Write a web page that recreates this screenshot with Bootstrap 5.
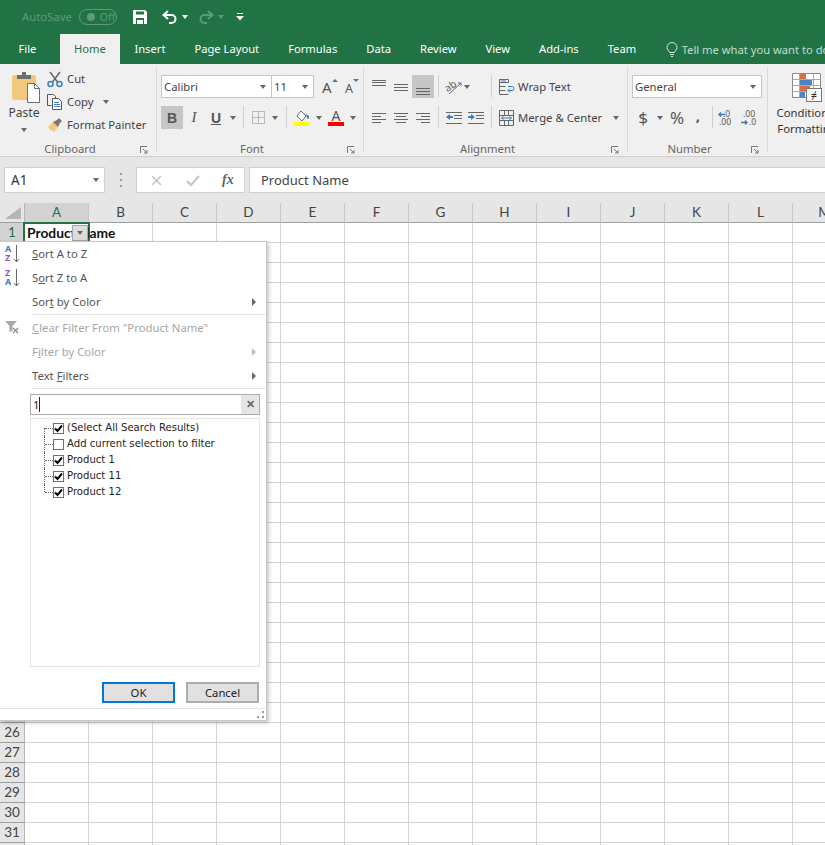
<!DOCTYPE html>
<html lang="en">
<head>
    <meta charset="UTF-8">
    <title>Excel - Filter menu</title>
    <link href="https://cdn.jsdelivr.net/npm/bootstrap@5.3.0/dist/css/bootstrap.min.css" rel="stylesheet">
    <style>
        html, body { height: 845px; overflow: hidden; }
        body { width: 825px; background: #fff; font: 11.3px/16px "Noto Sans", sans-serif; color: #444; }
        svg { overflow: visible; }

        /* title bar and tabs */
        .xl-title { height: 34px; background: #217346; padding-left: 22px; color: #5c9b7a; font-size: 11.3px; }
        .xl-pill { width: 38px; height: 16px; border: 1px solid #5c9b7a; border-radius: 8px; margin-left: 7px; font-size: 10.5px; padding-left: 7px; flex: none; }
        .xl-dot { width: 8px; height: 8px; border-radius: 50%; background: #5c9b7a; margin-right: 1px; flex: none; }
        .tb-save { margin-left: 16px; }
        .tb-undo { margin-left: 15px; }
        .tb-redo { margin-left: 10px; }
        .tb-tri { margin-left: 4px; }
        .tb-more { margin-left: 12px; }
        .xl-tabs { height: 30px; background: #217346; color: #fff; padding-left: 4px; font-size: 11.2px; white-space: nowrap; }
        .xl-tab { padding: 0 14.5px; line-height: 29px; height: 30px; flex: none; }
        .xl-tab.is-on { background: #f0f0f0; color: #217346; width: 60px; padding: 0; margin-left: 9px; text-align: center; }
        .xl-tell { color: #c5dbcf; margin-left: 15px; line-height: 29px; flex: none; }

        /* ribbon */
        .xl-ribbon { height: 93px; background: #f0f0f0; border-bottom: 1px solid #cfcfcf; overflow: hidden; }
        .rgrp { flex: none; }
        .rgrp-in { flex: 1 1 auto; min-width: 0; }
        .rbody { height: 77px; }
        .rbody-pad { padding: 11px 0 0 4px; }
        .rfoot { height: 14px; line-height: 15px; color: #666; }
        .rfoot-txt { flex: 1 1 auto; text-align: center; }
        .rlaunch { width: 16px; flex: none; }
        .rsep { width: 1px; flex: none; background: #d9d9d9; margin: 4px 0 4px; }
        .g-clip { width: 157px; } .g-font { width: 207px; } .g-align { width: 264px; } .g-num { width: 140px; }
        .g-cond { width: 78px; text-align: center; line-height: 16px; padding-top: 8px; }
        .cond-txt { margin-top: 3px; color: #333; white-space: nowrap; }
        .rrow { height: 23px; }
        .rrow + .rrow { margin-top: 8px; }
        .tl { height: 23px; display: flex; align-items: center; justify-content: center; flex: none; color: #555; }
        .tw8 { width: 8px; } .tw10 { width: 10px; } .tw11 { width: 11px; } .tw12 { width: 12px; } .tw14 { width: 14px; }
        .tw16 { width: 16px; } .tw18 { width: 18px; } .tw20 { width: 20px; } .tw22 { width: 22px; } .tw24 { width: 24px; }
        .tl.is-on { background: #c6c6c6; }
        .vsep { width: 1px; height: 22px; background: #d0d0d0; flex: none; }
        .tri { width: 0; height: 0; border-left: 4px solid transparent; border-right: 4px solid transparent; border-top: 4px solid #666; display: inline-block; }
        .tri.tiny { border-left-width: 3.5px; border-right-width: 3.5px; }
        .tri.on-green { border-top-color: #fff; }
        .tri.on-green.dim { border-top-color: #5c9b7a; }
        .triR { width: 0; height: 0; border-top: 4px solid transparent; border-bottom: 4px solid transparent; border-left: 4px solid #666; }
        .triR.off { border-left-color: #bdbdbd; }
        .combo { height: 23px; background: #fff; border: 1px solid #c6c6c6; padding: 0 5px 0 2px; line-height: 21px; flex: none; }
        .cw111 { width: 111px; } .cw43 { width: 43px; margin-left: -1px; } .cw130 { width: 130px; }
        .a-left { width: 123px; flex: none; }
        .a-right { margin-left: 7px; }
        .a-lbl { margin-left: 3px; white-space: nowrap; }
        .clip-side { padding-top: 3px; margin-left: 7px; }
        .clip-row { height: 23px; }
        .paste-col { width: 32px; margin-left: 8px; padding-top: 8px; text-align: center; line-height: 15px; }
        .paste-lbl { margin-top: 2px; font-size: 12px; }
        .copy-tri { margin-left: 10px; }
        .big-b { font: bold 14px/1 "Liberation Sans", sans-serif; }
        .big-i { font: italic 15px/1 "Liberation Serif", serif; }
        .big-u { font: bold 14px/1 "Liberation Sans", sans-serif; text-decoration: underline; }
        .num-sym { font-size: 17px; line-height: 1; }
        .num-comma { padding-bottom: 6px; font-weight: 700; font-size: 15px; }
        .merge-tri { margin-left: 11px; }

        /* formula bar */
        .xl-fbar { height: 46px; background: #e6e6e6; padding: 10px 0 10px 4px; }
        .fb-box { height: 26px; background: #fff; border: 1px solid #cfcfcf; flex: none; }
        .fb-name { width: 101px; padding: 0 5px 0 6px; font-size: 13.5px; line-height: 24px; color: #333; }
        .fb-dots { width: 31px; }
        .fb-btns { width: 109px; }
        .fb-x { margin-left: 14px; }
        .fb-ok { margin-left: 24px; }
        .fb-fx { margin-left: 22px; font: italic bold 14px/1 "Liberation Serif", serif; color: #666; }
        .fb-input { margin-left: 4px; flex: 1 1 auto; padding-left: 11px; margin-right: -4px; font-size: 13px; line-height: 24px; color: #444; }
        .fb-dots i { display: block; width: 2px; height: 2px; background: #9a9a9a; margin: 2px 0; }

        /* sheet */
        .xl-sheet { position: relative; height: 642px; overflow: hidden; }
        .sheet-grid { display: grid; grid-template-columns: 25px repeat(13, 64px); grid-auto-rows: 20px; font: 13.5px/19px Lato, sans-serif; color: #444; }
        .cl { border-right: 1px solid #d4d4d4; border-bottom: 1px solid #d4d4d4; }
        .hd { background: #e6e6e6; text-align: center; border-right: 1px solid #b5b5b5; border-bottom: 1px solid #9f9f9f; }
        .hd-col { border-right-color: #c8c8c8; }
        .hd.is-sel { background: #d2d2d2; color: #217346; }
        .corner { width: 0; height: 0; border-left: 16px solid transparent; border-bottom: 12px solid #b5b5b5; margin: 4px 0 0 5px; }
        .cell-sel { position: absolute; left: 23px; top: 19px; width: 67px; height: 22px; border: 2px solid #217346; font: bold 13.8px/18px Lato, sans-serif; color: #111; padding-left: 2px; white-space: nowrap; }
        .filter-btn { position: absolute; left: 72px; top: 22px; width: 16px; height: 16px; background: #dcdcdc; border: 1px solid #a6a6a6; display: flex; align-items: center; justify-content: center; }

        /* filter menu */
        .flt-menu { position: absolute; left: 0; top: 38px; width: 267px; height: 480px; background: #fff; border: 1px solid #c8c8c8; border-left: 0; box-shadow: 2px 2px 4px rgba(0,0,0,.22); }
        .flt-item { height: 24px; line-height: 23px; padding-left: 32px; padding-right: 10px; position: relative; color: #555; }
        .flt-item.off { color: #a6a6a6; }
        .flt-ico { position: absolute; left: 4px; top: 2px; }
        .flt-sep { height: 1px; background: #e3e3e3; margin: 0 0 1px 32px; }
        .flt-sep.lo { margin-bottom: 5px; }
        .flt-search { height: 21px; margin-left: 30px; width: 230px; border: 1px solid #ababab; line-height: 19px; padding-left: 2px; color: #222; }
        .flt-x { width: 18px; background: #e6e6e6; color: #666; font-weight: 700; text-align: center; line-height: 18px; }
        .flt-list { width: 230px; height: 249px; margin: 3px 0 0 30px; border: 1px solid #e3e3e3; padding: 1px 0 0 13px; list-style: none; font: 10.1px/16px "DejaVu Sans", sans-serif; color: #222; white-space: nowrap; }
        .flt-list li { height: 16px; position: relative; padding-left: 9px; display: flex; align-items: center; }
        .flt-list li::before { content: ""; position: absolute; left: 0; top: 0; bottom: 0; border-left: 1px dotted #666; }
        .flt-list li:last-child::before { bottom: 8px; }
        .flt-list li:first-child::before { top: 8px; }
        .flt-list li::after { content: ""; position: absolute; left: 1px; width: 8px; top: 8px; border-top: 1px dotted #666; }
        .flt-chk { width: 11px; height: 11px; border: 1px solid #707070; background: #fff; margin-right: 3px; flex: none; display: flex; }
        .flt-btns { margin: 15px 7px 0 0; }
        .flt-btn { width: 73px; height: 21px; background: #e1e1e1; border: 2px solid #adadad; line-height: 17px; text-align: center; color: #222; }
        .flt-btn.is-def { border-color: #0078d7; margin-right: 11px; }
        .flt-foot { height: 1px; background: #dce6f0; margin-top: 5px; }
        .flt-grip { position: absolute; right: 2px; bottom: 2px; }
    </style>
</head>
<body>

<!-- Title bar -->
<div class="xl-title d-flex align-items-center">
    <span>AutoSave</span>
    <div class="xl-pill d-flex align-items-center"><span class="xl-dot"></span><span class="ms-1">Off</span></div>
    <svg class="tb-save" width="14" height="14" viewBox="0 0 14 14"><path fill="#fff" d="M0 0h12l2 2v12H0z"/><path fill="#217346" d="M3 1.500h8v3H3zM3 8h8v6H3z"/><path fill="#fff" d="M4 10h6v4H4z"/></svg>
    <svg class="tb-undo" width="16" height="15" viewBox="0 0 16 15" fill="none" stroke="#fff" stroke-width="2"><path d="M6 1 1.500 5 6 9M2 5h7.500a4 4 0 0 1 0 8H7"/></svg>
    <span class="tri tiny on-green tb-tri"></span>
    <svg class="tb-redo" width="16" height="15" viewBox="0 0 16 15" fill="none" stroke="#5c9b7a" stroke-width="2"><path d="M10 1l4.500 4L10 9M14 5H6.500a4 4 0 0 0 0 8H9"/></svg>
    <span class="tri tiny on-green dim tb-tri"></span>
    <svg class="tb-more" width="8" height="8" viewBox="0 0 8 8"><path fill="#fff" d="M1 0h6v1H1zM0 3h8L4 7.500z"/></svg>
</div>

<!-- Tabs -->
<div class="xl-tabs d-flex">
    <div class="xl-tab">File</div>
    <div class="xl-tab is-on">Home</div>
    <div class="xl-tab">Insert</div>
    <div class="xl-tab">Page Layout</div>
    <div class="xl-tab">Formulas</div>
    <div class="xl-tab">Data</div>
    <div class="xl-tab">Review</div>
    <div class="xl-tab">View</div>
    <div class="xl-tab">Add-ins</div>
    <div class="xl-tab">Team</div>
    <div class="xl-tell d-flex align-items-center">
        <svg class="me-1" width="12" height="15" viewBox="0 0 12 15" fill="none" stroke="#d9e8e0"><path d="M3.500 10.500C3 8.500 1 8 1 5.500a5 5 0 0 1 10 0c0 2.500-2 3-2.500 5zM4 12.500h4M5 14.500h2"/></svg>
        <span>Tell me what you want to do</span>
    </div>
</div>

<!-- Ribbon -->
<div class="xl-ribbon d-flex">

    <!-- Clipboard -->
    <div class="rgrp g-clip d-flex">
        <div class="rgrp-in">
            <div class="rbody d-flex">
                <div class="paste-col">
                    <svg class="d-block" width="32" height="31" viewBox="0 0 32 31">
                        <rect x="4" y="3" width="24" height="25" rx="2" fill="#f0c97e"/>
                        <path fill="#6e6e6e" d="M9 3h5V0h4v3h5v4H9z"/>
                        <path fill="#fff" stroke="#6e6e6e" d="M19.500 11.500h7l5 5v14h-12z"/>
                        <path fill="none" stroke="#6e6e6e" d="M26.500 11.500v5h5"/>
                    </svg>
                    <div class="paste-lbl">Paste</div>
                    <span class="tri tiny"></span>
                </div>
                <div class="clip-side">
                    <div class="clip-row d-flex align-items-center">
                        <svg width="16" height="16" viewBox="0 0 16 16" fill="none"><path stroke="#666" stroke-width="1.500" d="M3 1l7.500 10M13 1L5.500 11"/><circle cx="3.500" cy="13" r="2.500" stroke="#3f7cb8" stroke-width="1.500"/><circle cx="12.500" cy="13" r="2.500" stroke="#3f7cb8" stroke-width="1.500"/></svg>
                        <span class="ms-1">Cut</span>
                    </div>
                    <div class="clip-row d-flex align-items-center">
                        <svg width="16" height="16" viewBox="0 0 16 16" fill="none"><path stroke="#555" d="M.5.500h6l2 2v3M.5.500v11h4"/><path fill="#fff" stroke="#555" d="M5.500 4.500h6l3 3v8h-9z"/><path stroke="#3f7cb8" d="M7 8.500h5M7 10.500h6M7 12.500h6"/></svg>
                        <span class="ms-1">Copy</span>
                        <span class="tri tiny copy-tri"></span>
                    </div>
                    <div class="clip-row d-flex align-items-center">
                        <svg width="16" height="16" viewBox="0 0 16 16"><path fill="#f0c97e" d="M1 10l5-5 5 5-4 5-2-2-1 1z"/><path fill="#777" d="M6 5l4-2 2-2 3 3-2 2-2 4z"/></svg>
                        <span class="ms-1">Format Painter</span>
                    </div>
                </div>
            </div>
            <div class="rfoot d-flex">
                <div class="rfoot-txt">Clipboard</div>
                <div class="rlaunch"><svg width="8" height="8" viewBox="0 0 8 8" fill="none" stroke="#777"><path d="M.5 7V.5H7M3 3l4 4M7 4v3H4"/></svg></div>
            </div>
        </div>
        <div class="rsep"></div>
    </div>

    <!-- Font -->
    <div class="rgrp g-font d-flex">
        <div class="rgrp-in">
            <div class="rbody rbody-pad">
                <div class="rrow d-flex">
                    <div class="combo cw111 d-flex justify-content-between align-items-center"><span>Calibri</span><span class="tri tiny"></span></div>
                    <div class="combo cw43 d-flex justify-content-between align-items-center"><span>11</span><span class="tri tiny"></span></div>
                    <div class="tl tw24 ms-1">
                        <svg width="18" height="23" viewBox="0 0 18 23"><text x="1" y="18" font-family="Noto Sans, sans-serif" font-size="15" fill="#555">A</text><path fill="#3f7cb8" d="M11 7l3-3 3 3z"/></svg>
                    </div>
                    <div class="tl tw20">
                        <svg width="16" height="23" viewBox="0 0 16 23"><text x="1" y="18" font-family="Noto Sans, sans-serif" font-size="12.500" fill="#555">A</text><path fill="#3f7cb8" d="M9 4h6l-3 3z"/></svg>
                    </div>
                </div>
                <div class="rrow d-flex">
                    <div class="tl tw22 is-on big-b">B</div>
                    <div class="tl tw22 big-i">I</div>
                    <div class="tl tw22 big-u">U</div>
                    <div class="tl tw12"><span class="tri tiny"></span></div>
                    <div class="vsep ms-1"></div>
                    <div class="tl tw20 ms-1">
                        <svg width="13" height="13" viewBox="0 0 13 13" fill="none" stroke="#888" stroke-dasharray="1 1"><path d="M.5.500h12v12H.5zM6.500.500v12M.5 6.500h12"/></svg>
                    </div>
                    <div class="tl tw14"><span class="tri tiny"></span></div>
                    <div class="vsep ms-1"></div>
                    <div class="tl tw22 ms-1">
                        <svg width="16" height="16" viewBox="0 0 16 16"><path fill="#fff" stroke="#666" d="M7 1l5 5-4 5-5-5z"/><path fill="#3f7cb8" d="M12 4l3 2v3l-2-1z"/><rect y="12" width="16" height="4" fill="#ffff00"/></svg>
                    </div>
                    <div class="tl tw11"><span class="tri tiny"></span></div>
                    <div class="tl tw24">
                        <svg width="16" height="20" viewBox="0 0 16 20"><text x="8" y="13" text-anchor="middle" font-family="Noto Sans, sans-serif" font-size="14" fill="#555">A</text><rect y="14" width="16" height="4" fill="#ff0000"/></svg>
                    </div>
                    <div class="tl tw10"><span class="tri tiny"></span></div>
                </div>
            </div>
            <div class="rfoot d-flex">
                <div class="rfoot-txt">Font</div>
                <div class="rlaunch"><svg width="8" height="8" viewBox="0 0 8 8" fill="none" stroke="#777"><path d="M.5 7V.5H7M3 3l4 4M7 4v3H4"/></svg></div>
            </div>
        </div>
        <div class="rsep"></div>
    </div>

    <!-- Alignment -->
    <div class="rgrp g-align d-flex">
        <div class="rgrp-in">
            <div class="rbody rbody-pad">
                <div class="rrow d-flex">
                    <div class="a-left d-flex">
                        <div class="tl tw22"><svg width="14" height="16" viewBox="0 0 14 16" stroke="#666"><path d="M0 1.500h14M0 3.500h14M0 6.500h14"/></svg></div>
                        <div class="tl tw22"><svg width="14" height="16" viewBox="0 0 14 16" stroke="#666"><path d="M0 5.500h14M0 8.500h14M0 11.500h14"/></svg></div>
                        <div class="tl tw22 is-on"><svg width="14" height="16" viewBox="0 0 14 16" stroke="#666"><path d="M0 9.500h14M0 12.500h14M0 15.500h14"/></svg></div>
                        <div class="vsep ms-1"></div>
                        <div class="tl tw20 ms-1"><svg width="18" height="20" viewBox="0 0 18 20" fill="none"><text x="1" y="13" font-family="Noto Sans, sans-serif" font-size="10" fill="#555" transform="rotate(-35 6 10)">ab</text><path stroke="#666" d="M5 17L17 6M17 6h-3M17 6v3"/></svg></div>
                        <div class="tl tw8"><span class="tri tiny"></span></div>
                    </div>
                    <div class="vsep"></div>
                    <div class="a-right d-flex align-items-center">
                        <svg width="16" height="16" viewBox="0 0 16 16" fill="none"><path stroke="#666" d="M.5.500h9v3h-9zM.5 7.500h6M.5 11.500h6M.5 15.500h9M.5.500v15"/><path stroke="#3f7cb8" d="M2 2h5M9 7.500h4a1.500 1.500 0 0 1 0 4H9M11 9.500l-2 2 2 2"/></svg>
                        <span class="a-lbl">Wrap Text</span>
                    </div>
                </div>
                <div class="rrow d-flex">
                    <div class="a-left d-flex">
                        <div class="tl tw22"><svg width="14" height="10" viewBox="0 0 14 10" stroke="#666"><path d="M0 .5h14M0 3.500h9M0 6.500h14M0 9.500h9"/></svg></div>
                        <div class="tl tw22"><svg width="14" height="10" viewBox="0 0 14 10" stroke="#666"><path d="M0 .5h14M2 3.500h10M0 6.500h14M2 9.500h10"/></svg></div>
                        <div class="tl tw22"><svg width="14" height="10" viewBox="0 0 14 10" stroke="#666"><path d="M0 .5h14M5 3.500h9M0 6.500h14M5 9.500h9"/></svg></div>
                        <div class="vsep ms-1"></div>
                        <div class="tl tw22 ms-1"><svg width="16" height="12" viewBox="0 0 16 12"><path stroke="#666" d="M0 .5h16M8 3.500h8M8 6.500h8M0 11.500h16"/><path fill="#3f7cb8" d="M0 5l4-3v2h3v2H4v2z"/></svg></div>
                        <div class="tl tw22"><svg width="16" height="12" viewBox="0 0 16 12"><path stroke="#666" d="M0 .5h16M8 3.500h8M8 6.500h8M0 11.500h16"/><path fill="#3f7cb8" d="M7 5L3 2v2H0v2h3v2z"/></svg></div>
                    </div>
                    <div class="vsep"></div>
                    <div class="a-right d-flex align-items-center">
                        <svg width="16" height="16" viewBox="0 0 16 16" fill="none"><path stroke="#666" d="M.5.500h14v15H.5zM.5 5.500h14M.5 10.500h14M5.500.500v5M9.500.500v5M5.500 10.500v5M9.500 10.500v5"/><path fill="#f0f0f0" d="M1 6h13v4H1z"/><path stroke="#3f7cb8" d="M2.500 8h10M4.500 6.500L2.500 8l2 1.500M10.500 6.500l2 1.500-2 1.500"/></svg>
                        <span class="a-lbl">Merge &amp; Center</span>
                        <span class="tri tiny merge-tri"></span>
                    </div>
                </div>
            </div>
            <div class="rfoot d-flex">
                <div class="rfoot-txt">Alignment</div>
                <div class="rlaunch"><svg width="8" height="8" viewBox="0 0 8 8" fill="none" stroke="#777"><path d="M.5 7V.5H7M3 3l4 4M7 4v3H4"/></svg></div>
            </div>
        </div>
        <div class="rsep"></div>
    </div>

    <!-- Number -->
    <div class="rgrp g-num d-flex">
        <div class="rgrp-in">
            <div class="rbody rbody-pad">
                <div class="rrow d-flex">
                    <div class="combo cw130 d-flex justify-content-between align-items-center"><span>General</span><span class="tri tiny"></span></div>
                </div>
                <div class="rrow d-flex">
                    <div class="tl tw22 num-sym">$</div>
                    <div class="tl tw12"><span class="tri tiny"></span></div>
                    <div class="tl tw22 num-sym">%</div>
                    <div class="tl tw20 num-comma">,</div>
                    <div class="vsep ms-1"></div>
                    <div class="tl tw18 ms-1">
                        <svg width="17" height="20" viewBox="0 0 17 20"><text x="5" y="9" font-family="Noto Sans, sans-serif" font-size="8.500" fill="#555">.0</text><text x="1" y="17" font-family="Noto Sans, sans-serif" font-size="8.500" fill="#555">.00</text><path fill="none" stroke="#3f7cb8" stroke-width="1.500" d="M7 6.500H1M3 4.500l-2 2 2 2"/></svg>
                    </div>
                    <div class="tl tw18 ms-1">
                        <svg width="17" height="20" viewBox="0 0 17 20"><text x="3" y="9" font-family="Noto Sans, sans-serif" font-size="8.500" fill="#555">.00</text><text x="9" y="17" font-family="Noto Sans, sans-serif" font-size="8.500" fill="#555">.0</text><path fill="none" stroke="#3f7cb8" stroke-width="1.500" d="M1 14.500h6M5 12.500l2 2-2 2"/></svg>
                    </div>
                </div>
            </div>
            <div class="rfoot d-flex">
                <div class="rfoot-txt">Number</div>
                <div class="rlaunch"><svg width="8" height="8" viewBox="0 0 8 8" fill="none" stroke="#777"><path d="M.5 7V.5H7M3 3l4 4M7 4v3H4"/></svg></div>
            </div>
        </div>
        <div class="rsep"></div>
    </div>

    <!-- Conditional formatting, cut off by the window -->
    <div class="rgrp g-cond">
        <svg class="d-block mx-auto" width="30" height="30" viewBox="0 0 30 30">
            <path fill="#fff" stroke="#888" d="M.5 1.500h28v24H.5z"/>
            <path fill="#dd6b47" d="M8 2h6v5H8zM8 14h10v5H8z"/>
            <path fill="#4a86c5" d="M8 8h12v5H8zM8 20h5v5H8z"/>
            <path stroke="#aaa" d="M.5 7.500h28M.5 13.500h28M.5 19.500h28M7.500 1.500v24M21.500 1.500v24"/>
            <rect x="14.500" y="16.500" width="15" height="13" fill="#fff" stroke="#777"/>
            <text x="22" y="27" text-anchor="middle" font-family="Noto Sans, sans-serif" font-size="11" fill="#333">&#8800;</text>
        </svg>
        <div class="cond-txt">Conditional<br>Formatting</div>
    </div>
</div>

<!-- Formula bar -->
<div class="xl-fbar d-flex">
    <div class="fb-box fb-name d-flex justify-content-between align-items-center"><span>A1</span><span class="tri tiny"></span></div>
    <div class="fb-dots d-flex flex-column justify-content-center align-items-center"><i></i><i></i><i></i></div>
    <div class="fb-box fb-btns d-flex align-items-center">
        <svg class="fb-x" width="11" height="11" viewBox="0 0 11 11" stroke="#c4c4c4" stroke-width="1.500"><path d="M1 1l9 9M10 1l-9 9"/></svg>
        <svg class="fb-ok" width="14" height="11" viewBox="0 0 14 11" fill="none" stroke="#c4c4c4" stroke-width="2"><path d="M1 6l4 4 8-9"/></svg>
        <span class="fb-fx">fx</span>
    </div>
    <div class="fb-box fb-input">Product Name</div>
</div>

<!-- Sheet -->
<div class="xl-sheet">
    <div class="sheet-grid" id="sheetGrid"></div>

    <div class="cell-sel">Product Name</div>
    <div class="filter-btn"><span class="tri tiny"></span></div>

    <!-- Filter dropdown -->
    <div class="flt-menu">
        <div class="flt-item">
            <svg class="flt-ico" width="18" height="20" viewBox="0 0 18 20"><text x="1" y="8" font-family="Noto Sans, sans-serif" font-size="9" font-weight="700" fill="#3f7cb8">A</text><text x="1" y="17" font-family="Noto Sans, sans-serif" font-size="9" font-weight="700" fill="#8e5bb5">Z</text><path fill="none" stroke="#666" d="M12.500 1v17M10 15l2.500 3 2.500-3"/></svg>
            <u>S</u>ort A to Z
        </div>
        <div class="flt-item">
            <svg class="flt-ico" width="18" height="20" viewBox="0 0 18 20"><text x="1" y="8" font-family="Noto Sans, sans-serif" font-size="9" font-weight="700" fill="#8e5bb5">Z</text><text x="1" y="17" font-family="Noto Sans, sans-serif" font-size="9" font-weight="700" fill="#3f7cb8">A</text><path fill="none" stroke="#666" d="M12.500 1v17M10 15l2.500 3 2.500-3"/></svg>
            S<u>o</u>rt Z to A
        </div>
        <div class="flt-item d-flex justify-content-between">
            <span>Sor<u>t</u> by Color</span><span class="triR align-self-center"></span>
        </div>
        <div class="flt-sep"></div>
        <div class="flt-item off">
            <svg class="flt-ico" width="18" height="18" viewBox="0 0 18 18"><path fill="#a8a8a8" d="M1 3h12L8.500 8v5l-3 1V8z"/><path stroke="#8a8a8a" fill="none" stroke-width="1.200" d="M9 10l5 5M14 10l-5 5"/></svg>
            <u>C</u>lear Filter From "Product Name"
        </div>
        <div class="flt-item off d-flex justify-content-between">
            <span>F<u>i</u>lter by Color</span><span class="triR off align-self-center"></span>
        </div>
        <div class="flt-item d-flex justify-content-between">
            <span>Text <u>F</u>ilters</span><span class="triR align-self-center"></span>
        </div>
        <div class="flt-sep lo"></div>
        <div class="flt-search d-flex justify-content-between">
            <span>1<span class="border-start border-dark"></span></span>
            <span class="flt-x">&#10005;</span>
        </div>
        <ul class="flt-list">
            <li><span class="flt-chk"><svg width="9" height="9" viewBox="0 0 9 9" fill="none" stroke="#000" stroke-width="2"><path d="M1 4.500l2.500 2.500L8 1.500"/></svg></span>(Select All Search Results)</li>
            <li><span class="flt-chk"></span>Add current selection to filter</li>
            <li><span class="flt-chk"><svg width="9" height="9" viewBox="0 0 9 9" fill="none" stroke="#000" stroke-width="2"><path d="M1 4.500l2.500 2.500L8 1.500"/></svg></span>Product 1</li>
            <li><span class="flt-chk"><svg width="9" height="9" viewBox="0 0 9 9" fill="none" stroke="#000" stroke-width="2"><path d="M1 4.500l2.500 2.500L8 1.500"/></svg></span>Product 11</li>
            <li><span class="flt-chk"><svg width="9" height="9" viewBox="0 0 9 9" fill="none" stroke="#000" stroke-width="2"><path d="M1 4.500l2.500 2.500L8 1.500"/></svg></span>Product 12</li>
        </ul>
        <div class="flt-btns d-flex justify-content-end">
            <div class="flt-btn is-def">OK</div>
            <div class="flt-btn">Cancel</div>
        </div>
        <div class="flt-foot"></div>
        <svg class="flt-grip" width="7" height="7" viewBox="0 0 7 7" fill="#9a9a9a"><path d="M5 0h2v2H5zM0 5h2v2H0zM5 5h2v2H5z"/></svg>
    </div>
</div>

<script src="https://cdn.jsdelivr.net/npm/bootstrap@5.3.0/dist/js/bootstrap.bundle.min.js"></script>
<script>
    // build the worksheet: header row, then 32 rows of 13 columns
    const grid = document.getElementById('sheetGrid');
    const letters = 'ABCDEFGHIJKLM'.split('');
    let html = '<div class="hd"><div class="corner"></div></div>';
    letters.forEach(function (l, i) {
        html += '<div class="hd hd-col' + (i === 0 ? ' is-sel' : '') + '">' + l + '</div>';
    });
    for (let r = 1; r <= 32; r++) {
        html += '<div class="hd' + (r === 1 ? ' is-sel' : '') + '">' + r + '</div>';
        letters.forEach(function () {
            html += '<div class="cl"></div>';
        });
    }
    grid.innerHTML = html;
</script>
</body>
</html>
